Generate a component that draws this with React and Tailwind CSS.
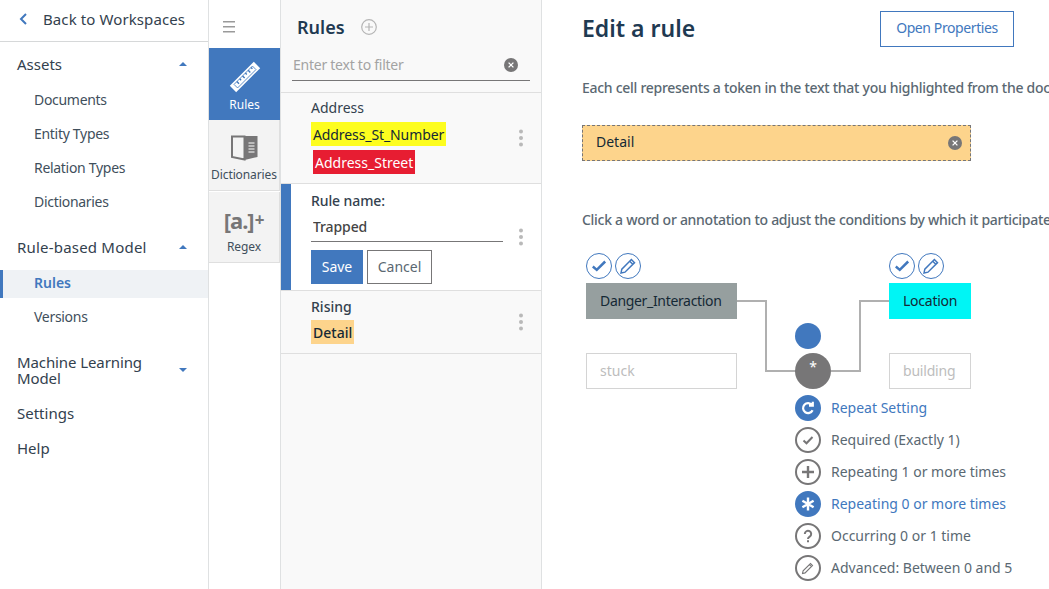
import { useState } from "react";

const font = { fontFamily: '"Noto Sans", sans-serif' };

function Caret({ down }) {
  return (
    <svg width="8" height="4" viewBox="0 0 8 4" className="fill-[#4178be]">
      <path d={down ? "M0 0h8L4 4z" : "M0 4h8L4 0z"} />
    </svg>
  );
}

function ClearIcon({ fill = "#777677" }) {
  return (
    <svg width="14" height="14" viewBox="0 0 14 14">
      <circle cx="7" cy="7" r="7" fill={fill} />
      <path d="M4.6 4.6l4.8 4.8M9.4 4.6l-4.8 4.8" stroke="#fff" strokeWidth="1.3" fill="none" />
    </svg>
  );
}

function Dots() {
  return (
    <svg width="6" height="18" viewBox="0 0 6 18" className="fill-[#b9b9b9]">
      <circle cx="3" cy="2.5" r="2" />
      <circle cx="3" cy="9" r="2" />
      <circle cx="3" cy="15.5" r="2" />
    </svg>
  );
}

function Sidebar() {
  const heading = "text-[15px] leading-[16px] text-[#33414e]";
  const child = "h-[34px] flex items-center pl-[34px] text-[14px] tracking-[-0.3px] text-[#3f4f5c]";
  return (
    <div className="w-[209px] shrink-0 border-r border-[#dfe1e2] bg-white">
      <div className="h-[42px] flex items-center border-b border-[#d6d8d9] pl-[19px] pb-[3px]">
        <svg width="8" height="12" viewBox="0 0 8 12" fill="none" stroke="#4178be" strokeWidth="2">
          <path d="M7 1L2 6l5 5" />
        </svg>
        <span className="ml-[16px] text-[15px] tracking-[0.1px] text-[#33414e]">Back to Workspaces</span>
      </div>
      <div className={`${heading} mt-[14px] h-[16px] pl-[17px] pr-[21px] flex items-center justify-between`}>
        <span>Assets</span>
        <Caret />
      </div>
      <div className="mt-[10px]">
        <div className={child}>Documents</div>
        <div className={child}>Entity Types</div>
        <div className={child}>Relation Types</div>
        <div className={child}>Dictionaries</div>
      </div>
      <div className={`${heading} mt-[21px] h-[16px] pl-[17px] pr-[21px] flex items-center justify-between`}>
        <span className="tracking-[0.2px]">Rule-based Model</span>
        <Caret />
      </div>
      <div className="mt-[15px] h-[28px] flex items-center bg-[#eff2f5] border-l-[3px] border-[#4178be] pl-[31px] pb-[3px] text-[14px] font-semibold text-[#4178be]">
        Rules
      </div>
      <div className="h-[38px] flex items-center pl-[34px] pb-[2px] text-[14px] tracking-[-0.3px] text-[#3f4f5c]">Versions</div>
      <div className={`${heading} mt-[18px] pl-[17px] pr-[21px] flex items-center justify-between`}>
        <span className="w-[140px] tracking-[-0.1px]">Machine Learning Model</span>
        <Caret down />
      </div>
      <div className={`${heading} mt-[19px] pl-[17px]`}>Settings</div>
      <div className={`${heading} mt-[19px] pl-[17px]`}>Help</div>
    </div>
  );
}

function IconRail() {
  const tile = "h-[71px] flex flex-col items-center bg-[#f3f3f3] border-r border-[#dfdfdf] text-[12px] tracking-[-0.1px] text-[#3f4f5c]";
  return (
    <div className="w-[72px] shrink-0 border-r border-[#dfe1e2] bg-white">
      <div className="h-[48px] flex pl-[14px] pt-[21px]">
        <svg width="12" height="12" viewBox="0 0 12 12" className="fill-[#9a9a9a]">
          <rect width="12" height="1.5" />
          <rect y="5" width="12" height="1.5" />
          <rect y="10" width="12" height="1.5" />
        </svg>
      </div>
      <div className="h-[72px] flex flex-col items-center bg-[#4178be] text-white text-[12px] pt-[14px]">
        <svg width="30" height="30" viewBox="0 0 30 30" className="overflow-visible">
          <g transform="rotate(-45 15 15)">
            <rect x="-2" y="10.5" width="34" height="9" fill="#fff" />
            <path d="M2 12.5h26v5H2z" fill="none" stroke="#4178be" strokeWidth="0.8" />
            <path d="M6 12.5v3M10 12.5v2M14 12.5v3M18 12.5v2M22 12.5v3M26 12.5v2" stroke="#4178be" strokeWidth="1.4" />
          </g>
        </svg>
        <span className="mt-[5px] leading-[16px]">Rules</span>
      </div>
      <div className={`${tile} pt-[15px] border-b border-[#dfdfdf]`}>
        <svg width="27" height="27" viewBox="0 0 27 27">
          <path d="M1 1.5h12.5v23L1 22z" fill="none" stroke="#777677" strokeWidth="2" />
          <path d="M13.5 1H26.5v21l-13 3z" fill="#777677" />
          <path d="M17.5 8h6M17.5 11h6M17.5 14h6M17.5 17h6" stroke="#fff" strokeWidth="1.2" />
        </svg>
        <span className="mt-[5px] leading-[16px]">Dictionaries</span>
      </div>
      <div className={`${tile} mt-[1px] pt-[13px] border-b border-[#dfdfdf]`}>
        <span className="h-[30px] flex items-center font-bold text-[#777677]">
          <span className="text-[22px] leading-[30px] tracking-[-1px]">[a.]</span>
          <span className="text-[17px] leading-[30px] ml-[1px]">+</span>
        </span>
        <span className="mt-[4px] leading-[16px]">Regex</span>
      </div>
    </div>
  );
}

function RulesPanel() {
  const [filter, setFilter] = useState("");
  const [name, setName] = useState("Trapped");
  return (
    <div className="w-[261px] shrink-0 border-r border-[#dfe1e2] bg-[#f9f9f9]">
      <div className="h-[44px] flex items-center pl-[16px] pt-[10px]">
        <span className="text-[18px] font-semibold text-[#1f3a52]">Rules</span>
        <svg width="16" height="16" viewBox="0 0 16 16" fill="none" stroke="#b5b5b5" strokeWidth="1.2" className="ml-[16px]">
          <circle cx="8" cy="8" r="7.3" />
          <path d="M8 4v8M4 8h8" />
        </svg>
      </div>
      <div className="ml-[11px] mr-[11px] mt-[7px] h-[30px] flex items-center border-b border-[#777677] pl-[1px] pr-[12px] pb-[2px]">
        <input
          value={filter}
          onChange={(e) => setFilter(e.target.value)}
          placeholder="Enter text to filter"
          className="flex-1 min-w-0 bg-transparent text-[14px] tracking-[-0.25px] outline-none placeholder:text-[#a3a3a3]"
        />
        <ClearIcon />
      </div>
      <div className="mt-[11px] h-[92px] border-t border-b border-[#dfdfdf] flex pl-[30px] pr-[17px]">
        <div className="flex-1 pt-[6px]">
          <div className="text-[14px] leading-[18px] text-[#33414e]">Address</div>
          <div className="mt-[5px] w-fit h-[24px] px-[2px] flex items-center bg-[#fdfd1f] text-[14px] tracking-[-0.1px] text-[#152935]">Address_St_Number</div>
          <div className="mt-[4px] ml-[2px] w-fit h-[24px] px-[2px] flex items-center bg-[#e71d32] text-[14px] text-white">Address_Street</div>
        </div>
        <div className="pt-[36px]"><Dots /></div>
      </div>
      <div className="h-[106px] bg-white border-l-[10px] border-[#4178be] flex pl-[20px] pr-[17px]">
        <div className="w-[193px] pt-[8px]">
          <div className="text-[14px] leading-[18px] font-medium tracking-[-0.1px] text-[#33414e]">Rule name:</div>
          <input
            value={name}
            onChange={(e) => setName(e.target.value)}
            className="mt-[4px] w-full h-[28px] pl-[2px] pb-[2px] bg-transparent border-b border-[#777677] text-[14px] font-medium tracking-[-0.1px] text-[#444] outline-none"
          />
          <div className="mt-[8px] flex gap-[4px]">
            <button className="h-[34px] w-[52px] pb-[2px] bg-[#4178be] text-[14px] text-white">Save</button>
            <button className="h-[34px] w-[65px] pb-[2px] border border-[#777677] bg-white text-[14px] text-[#5a6872]">Cancel</button>
          </div>
        </div>
        <div className="ml-[15px] pt-[44px]"><Dots /></div>
      </div>
      <div className="h-[64px] border-t border-b border-[#dfdfdf] flex pl-[30px] pr-[17px]">
        <div className="flex-1 pt-[7px]">
          <div className="text-[14px] leading-[18px] font-medium text-[#33414e]">Rising</div>
          <div className="mt-[4px] w-fit h-[24px] px-[2px] flex items-center bg-[#fdd48c] text-[14px] font-medium text-[#152935]">Detail</div>
        </div>
        <div className="pt-[22px]"><Dots /></div>
      </div>
    </div>
  );
}

function RoundIcon({ active, children }) {
  return (
    <span className={`w-[26px] h-[26px] shrink-0 rounded-full flex items-center justify-center border-2 ${active ? "bg-[#4178be] border-[#4178be] text-white" : "border-[#777677] text-[#777677]"}`}>
      <svg width="16" height="16" viewBox="0 0 16 16" fill="none" stroke="currentColor" strokeWidth="2">
        {children}
      </svg>
    </span>
  );
}

function SmallAction({ children }) {
  return (
    <span className="w-[26px] h-[26px] rounded-full border border-[#4178be] flex items-center justify-center bg-white">
      <svg width="18" height="18" viewBox="0 0 16 16" fill="none" stroke="#4178be" strokeWidth="2.2">
        {children}
      </svg>
    </span>
  );
}

const checkPath = <path d="M2.5 8.5l3.5 3L13.5 4" />;
const pencilPath = <path strokeWidth="1.3" d="M1.8 14.2l.7-3.4L11 2.2l2.8 2.8-8.5 8.5zM9.5 3.7l2.8 2.8" />;

const repeatOptions = [
  { label: "Repeat Setting", active: true, icon: <path strokeWidth="2.2" d="M12.6 10.2A5 5 0 1 1 12 5M12.8 1.8V5.6H9" /> },
  { label: "Required (Exactly 1)", icon: <path d="M3.5 8.5l3 2.8L12.5 5" /> },
  { label: "Repeating 1 or more times", icon: <path strokeWidth="2.4" d="M8 2v12M2 8h12" /> },
  { label: "Repeating 0 or more times", active: true, icon: <path strokeWidth="2.4" d="M8 1.5v13M2.4 4.8l11.2 6.4M13.6 4.8L2.4 11.2" /> },
  { label: "Occurring 0 or 1 time", icon: <path d="M4.8 6a3.2 3.2 0 1 1 4.9 2.7C8.6 9.4 8 9.9 8 11M8 12.2v2" /> },
  { label: "Advanced: Between 0 and 5", icon: <path strokeWidth="1.1" d="M2.5 13.5l.6-2.6 7.4-7.4 2 2-7.4 7.4zM9.4 4.6l2 2" /> },
];

function Diagram() {
  return (
    <div className="relative mt-[22px] h-[337px] w-[507px] ml-[-40px]">
      <svg width="507" height="337" className="absolute left-0 top-0" fill="none" stroke="#b0b0b0" strokeWidth="2">
        <path d="M195 49h29v70h30M289 119h29V49h30" />
      </svg>

      <div className="absolute left-[44px] top-[1px] flex gap-[3px]">
        <SmallAction>{checkPath}</SmallAction>
        <SmallAction>{pencilPath}</SmallAction>
      </div>
      <div className="absolute left-[347px] top-[1px] flex gap-[3px]">
        <SmallAction>{checkPath}</SmallAction>
        <SmallAction>{pencilPath}</SmallAction>
      </div>

      <div className="absolute left-[44px] top-[31px] w-[151px] h-[36px] bg-[#969f9f] flex items-center pl-[14px] pb-[2px] text-[14px] tracking-[-0.33px] text-[#152935]">Danger_Interaction</div>
      <div className="absolute left-[347px] top-[31px] w-[82px] h-[36px] bg-[#00f5f5] flex items-center pl-[14px] pb-[2px] text-[14px] tracking-[-0.25px] text-[#152935]">Location</div>
      <div className="absolute left-[44px] top-[101px] w-[151px] h-[36px] border border-[#d4d4d4] bg-white flex items-center pl-[13px] pb-[2px] text-[14px] text-[#bdbdbd]">stuck</div>
      <div className="absolute left-[347px] top-[101px] w-[82px] h-[36px] border border-[#d4d4d4] bg-white flex items-center pl-[13px] pb-[2px] text-[14px] tracking-[-0.2px] text-[#bdbdbd]">building</div>

      <div className="absolute left-[253px] top-[71px] w-[26px] h-[26px] rounded-full bg-[#4178be]" />
      <div className="absolute left-[253px] top-[101px] w-[36px] h-[36px] rounded-full bg-[#777677] flex justify-center pt-[3px] text-[14px] text-white">*</div>

      <div className="absolute left-[253px] top-[143px] flex flex-col gap-[6px]">
        {repeatOptions.map((opt) => (
          <div key={opt.label} className="h-[26px] flex items-center gap-[10px] whitespace-nowrap">
            <RoundIcon active={opt.active}>{opt.icon}</RoundIcon>
            <span className={`text-[14px] pb-[1px] ${opt.active ? "text-[#4178be]" : "text-[#5a6872]"}`}>{opt.label}</span>
          </div>
        ))}
      </div>
    </div>
  );
}

function Editor() {
  return (
    <div className="flex-1 min-w-0 overflow-hidden bg-white pl-[40px]">
      <div className="h-[47px] flex items-end w-[432px] justify-between pt-[11px]">
        <h1 className="text-[23px] leading-[34px] font-semibold text-[#1f3a52] mb-[2px]">Edit a rule</h1>
        <button className="h-[36px] w-[134px] pb-[3px] border border-[#4178be] text-[14px] tracking-[-0.4px] text-[#4178be]">Open Properties</button>
      </div>
      <p className="mt-[31px] text-[14px] leading-[20px] text-[#5a6872] font-medium tracking-[-0.28px] whitespace-nowrap">Each cell represents a token in the text that you highlighted from the document.</p>
      <div className="mt-[27px] w-[389px] h-[36px] border border-dashed border-[#777677] bg-[#fdd48c] flex items-center justify-between pl-[13px] pr-[8px] text-[14px] text-[#152935]">
        <span className="pb-[3px]">Detail</span>
        <ClearIcon />
      </div>
      <p className="mt-[49px] text-[14px] leading-[20px] text-[#5a6872] font-medium tracking-[-0.28px] whitespace-nowrap">Click a word or annotation to adjust the conditions by which it participates in the rule.</p>
      <Diagram />
    </div>
  );
}

export default function App() {
  return (
    <div className="h-[589px] w-[1049px] overflow-hidden flex bg-white" style={font}>
      <Sidebar />
      <IconRail />
      <RulesPanel />
      <Editor />
    </div>
  );
}
